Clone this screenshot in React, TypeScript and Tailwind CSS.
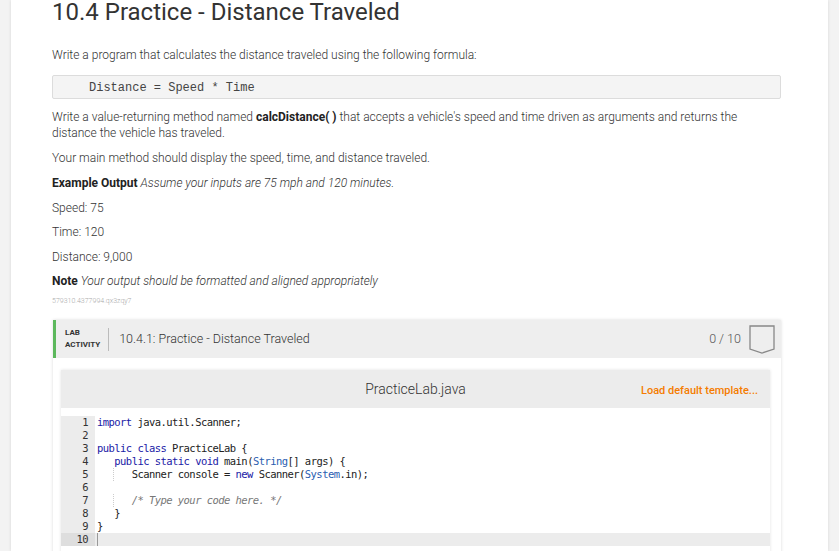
import React from "react";

const kw = "text-[#1a1aa6]";
const ty = "text-[#2a5db0]";

function CodeLine({
  n,
  children,
  active,
  guide,
}: {
  n: number;
  children?: React.ReactNode;
  active?: boolean;
  guide?: boolean;
}) {
  return (
    <div className={`flex h-[13px] leading-[13px] ${active ? "bg-[#ececec]" : ""}`}>
      <div className={`w-[34px] shrink-0 pr-[7px] text-right text-[#333] ${active ? "bg-[#dedede]" : "bg-[#ececec]"}`}>
        {n}
      </div>
      <div className="relative whitespace-pre pl-[2px] text-[#222]">
        {children}
        {guide && <span className="absolute left-[18px] top-0 h-[13px] border-l border-dotted border-[#ccc]" />}
        {active && <span className="absolute left-[2px] top-0 h-[13px] w-px bg-[#999]" />}
      </div>
    </div>
  );
}

export default function App() {
  return (
    <div
      className="h-[551px] w-[839px] overflow-hidden bg-[#f3f3f3]"
      style={{ fontFamily: "Roboto, 'Liberation Sans', sans-serif" }}
    >
      <div className="ml-[11px] flow-root h-full w-[817px] overflow-hidden bg-white pl-[41px] pr-[47px] shadow-[0_0_3px_rgba(0,0,0,0.12)]">
        <h1 className="-mt-[3px] text-[24px] leading-[30px] font-normal text-[#333]">
          10.4 Practice - Distance Traveled
        </h1>

        <div className="mt-[20px] text-[12px] font-light leading-4 text-[#333]">
          <p className="mb-[12px]">Write a program that calculates the distance traveled using the following formula:</p>

          <div className="mb-[10px] h-[24px] rounded-[2px] border border-[#dcdcdc] bg-[#f4f4f4] pl-[36px] text-[#444] leading-[22px]">
            <span style={{ fontFamily: "'Liberation Mono', monospace" }} className="text-[12px]">
              Distance = Speed * Time
            </span>
          </div>

          <p className="mb-[9px] pr-[40px]">
            Write a value-returning method named <b className="font-bold text-[#222]">calcDistance( )</b> that accepts a
            vehicle's speed and time driven as arguments and returns the distance the vehicle has traveled.
          </p>
          <p className="mb-[9px]">Your main method should display the speed, time, and distance traveled.</p>
          <p className="mb-[8.5px]">
            <b className="font-bold text-[#222]">Example Output</b> <i>Assume your inputs are 75 mph and 120 minutes.</i>
          </p>
          <p className="mb-[8.5px]">Speed: 75</p>
          <p className="mb-[8.5px]">Time: 120</p>
          <p className="mb-[8.5px]">Distance: 9,000</p>
          <p className="mb-[7px]">
            <b className="font-bold text-[#222]">Note</b> <i>Your output should be formatted and aligned appropriately</i>
          </p>
          <p className="text-[7px] leading-[10px] text-[#aaa]">579310.4377994.qx3zqy7</p>
        </div>

        <div className="mt-[14px] mb-[4px] ml-px w-[728px] shadow-[0_0_3px_rgba(0,0,0,0.15)]">
          <div className="flex h-[38px] items-center border-l-[3px] border-[#5cb85c] bg-[#eeeeee] pr-[6px]">
            <div className="ml-[9px] text-[8px] font-bold leading-[12px] text-[#333]">
              <div>LAB</div>
              <div>ACTIVITY</div>
            </div>
            <div className="ml-[8px] h-[23px] w-px bg-[#bbb]" />
            <div className="ml-[10px] text-[12.5px] font-light text-[#333]">10.4.1: Practice - Distance Traveled</div>
            <div className="ml-auto mr-[8px] text-[12.5px] font-light text-[#555]">0 / 10</div>
            <svg width="26" height="30" viewBox="0 0 26 30" className="mt-[2px]">
              <path d="M1 1 H25 V24 L13 28 L1 24 Z" fill="none" stroke="#888" strokeWidth="1.3" />
            </svg>
          </div>

          <div className="bg-white pl-[8px] pr-[11px] pt-[12px]">
            <div className="bg-white shadow-[0_0_3px_rgba(0,0,0,0.12)]">
              <div className="relative flex h-[38px] items-center justify-center bg-[#ececec]">
                <span className="text-[14px] font-light text-[#333]">PracticeLab.java</span>
                <span className="absolute right-[12px] top-[13px] text-[11px] font-medium text-[#f57c00]">
                  Load default template...
                </span>
              </div>
              <div
                className="pb-[40px] pt-[8px] text-[10.5px]"
                style={{ fontFamily: "'DejaVu Sans Mono', 'Liberation Mono', monospace", letterSpacing: "-0.55px" }}
              >
                <CodeLine n={1}>
                  <span className={kw}>import</span> java.util.Scanner;
                </CodeLine>
                <CodeLine n={2} />
                <CodeLine n={3}>
                  <span className={kw}>public</span> <span className={kw}>class</span> PracticeLab {"{"}
                </CodeLine>
                <CodeLine n={4}>
                  {"   "}
                  <span className={kw}>public</span> <span className={kw}>static</span> <span className={kw}>void</span>{" "}
                  main(<span className={ty}>String</span>[] args) {"{"}
                </CodeLine>
                <CodeLine n={5} guide>
                  {"      "}Scanner console = <span className={kw}>new</span> Scanner(<span className={ty}>System</span>.in);
                </CodeLine>
                <CodeLine n={6} />
                <CodeLine n={7} guide>
                  {"      "}
                  <i className="text-[#777]">/* Type your code here. */</i>
                </CodeLine>
                <CodeLine n={8}>{"   }"}</CodeLine>
                <CodeLine n={9}>{"}"}</CodeLine>
                <CodeLine n={10} active />
              </div>
            </div>
          </div>
        </div>
      </div>
    </div>
  );
}
